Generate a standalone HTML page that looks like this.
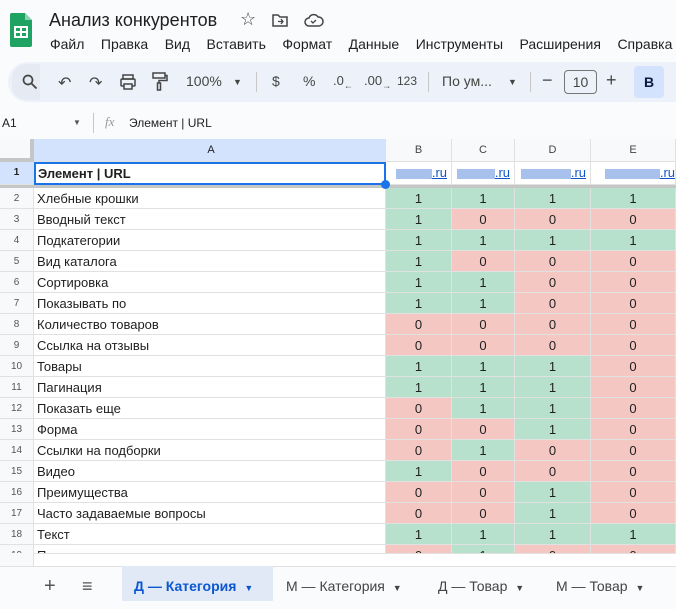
<!DOCTYPE html><html><head><meta charset="utf-8"><style>
*{box-sizing:border-box;margin:0;padding:0}
body{width:676px;height:601px;overflow:hidden;background:#f9fbfd;font-family:"Liberation Sans",Arial,sans-serif;position:relative;color:#1f1f1f}
.a{position:absolute}
.menu span{margin-right:16.5px}
.tb{position:absolute;top:62px;left:8px;width:700px;height:40px;background:#edf2fa;border-radius:20px}
.ic{position:absolute;top:73px;font-size:14px;color:#444}
.grid{position:absolute;left:0;top:139px;width:676px;height:414px;background:#fff;overflow:hidden}
.r{position:absolute;left:0;width:676px;height:21px;font-size:13px}
.r div{position:absolute;top:0;height:21px;border-right:1px solid #e1e1e1;border-bottom:1px solid #e1e1e1;line-height:21px}
.n{left:0;width:34px;background:#f8f9fa;color:#555;font-size:10px;text-align:center}
.A{left:34px;width:352px;padding-left:3px}
.B{left:386px;width:66px;text-align:center}
.C{left:452px;width:63px;text-align:center}
.D{left:515px;width:76px;text-align:center}
.E{left:591px;width:85px;text-align:center}
.g{background:#b7e1cd}.p{background:#f4c7c3}
.u{color:#1155cc;text-decoration:underline;font-size:13px;text-align:right!important;padding-right:4px}
.bl{display:inline-block;height:10px;background:#a8c1ec;vertical-align:middle}
.tab{position:absolute;top:566px;height:35px;line-height:41px;font-size:14px;color:#444;padding:0 12px}
</style></head><body>
<svg class="a" style="left:10px;top:13px" width="22" height="34" viewBox="0 0 22 34"><path d="M2 0h13l7 7v25a2 2 0 0 1-2 2H2a2 2 0 0 1-2-2V2a2 2 0 0 1 2-2z" fill="#1ea362"/><path d="M15 0v7h7z" fill="#8ed1b1"/><rect x="5" y="14" width="12" height="10" fill="none" stroke="#fff" stroke-width="2"/><path d="M5 19h12M11 14v10" stroke="#fff" stroke-width="2"/></svg>
<div class="a" style="left:49px;top:10px;font-size:18px;color:#1f1f1f">Анализ конкурентов</div>
<div class="a" style="left:240px;top:9px;font-size:18px;color:#444">☆</div>
<svg class="a" style="left:272px;top:13px" width="16" height="14"><path d="M1 2h5l2 2h7v9H1z" fill="none" stroke="#444" stroke-width="1.5"/><path d="M6 8.5h5M9 6l2 2.5L9 11" stroke="#444" stroke-width="1.3" fill="none"/></svg>
<svg class="a" style="left:304px;top:13px" width="20" height="14"><path d="M5 13a4 4 0 0 1 0-8 5 5 0 0 1 9-1 4 4 0 0 1 1 9z" fill="none" stroke="#444" stroke-width="1.5"/><path d="M7 8l2 2 3-3" stroke="#444" stroke-width="1.3" fill="none"/></svg>
<div class="a menu" style="left:50px;top:36px;font-size:14px;white-space:nowrap"><span>Файл</span><span>Правка</span><span>Вид</span><span>Вставить</span><span>Формат</span><span>Данные</span><span>Инструменты</span><span>Расширения</span><span>Справка</span></div>
<div class="tb"></div>
<div class="a" style="left:12px;top:64px;width:28px;height:36px;background:#e6ebf3;border-radius:14px 0 0 14px"></div>
<svg class="a" style="left:22px;top:74px" width="16" height="16"><circle cx="6" cy="6" r="4.5" fill="none" stroke="#444" stroke-width="1.7"/><path d="M9.5 9.5l5 5" stroke="#444" stroke-width="1.8"/></svg>
<div class="ic" style="left:58px;font-size:16px">↶</div>
<div class="ic" style="left:89px;font-size:16px">↷</div>
<svg class="a" style="left:120px;top:74px" width="16" height="16"><rect x="3" y="1" width="10" height="4" fill="none" stroke="#444" stroke-width="1.5"/><rect x="1" y="5" width="14" height="7" rx="1" fill="none" stroke="#444" stroke-width="1.5"/><rect x="4" y="10" width="8" height="5" fill="#edf2fa" stroke="#444" stroke-width="1.5"/></svg>
<svg class="a" style="left:152px;top:72px" width="16" height="20"><rect x="1" y="1" width="12" height="5" fill="none" stroke="#444" stroke-width="1.5"/><path d="M13 3.5h2v5H7v3" fill="none" stroke="#444" stroke-width="1.5"/><rect x="5.5" y="11" width="3" height="7" fill="none" stroke="#444" stroke-width="1.5"/></svg>
<div class="ic" style="left:186px;font-size:14px">100%</div>
<div class="ic" style="left:233px;font-size:9px;top:77px">▼</div>
<div class="a" style="left:256px;top:72px;width:1px;height:20px;background:#c7c7c7"></div>
<div class="ic" style="left:272px">$</div>
<div class="ic" style="left:303px">%</div>
<div class="ic" style="left:333px;font-size:13px">.0<sub style="font-size:9px">←</sub></div>
<div class="ic" style="left:364px;font-size:13px">.00<sub style="font-size:9px">→</sub></div>
<div class="ic" style="left:397px;font-size:12px;top:74px">123</div>
<div class="a" style="left:428px;top:72px;width:1px;height:20px;background:#c7c7c7"></div>
<div class="ic" style="left:442px">По ум...</div>
<div class="ic" style="left:508px;font-size:9px;top:77px">▼</div>
<div class="a" style="left:530px;top:72px;width:1px;height:20px;background:#c7c7c7"></div>
<div class="ic" style="left:542px;font-size:18px;top:70px">−</div>
<div class="a" style="left:564px;top:70px;width:33px;height:24px;border:1px solid #747775;border-radius:4px;font-size:14px;text-align:center;line-height:22px;color:#444">10</div>
<div class="ic" style="left:606px;font-size:18px;top:70px">+</div>
<div class="a" style="left:634px;top:66px;width:30px;height:32px;background:#d3e3fd;border-radius:4px;font-weight:bold;font-size:14px;text-align:center;line-height:32px;color:#0b1a3f">B</div>
<div class="a" style="left:2px;top:116px;font-size:12px">A1</div>
<div class="a" style="left:73px;top:118px;font-size:8px;color:#555">▼</div>
<div class="a" style="left:93px;top:113px;width:1px;height:20px;background:#c7c7c7"></div>
<div class="a" style="left:105px;top:114px;font-size:13px;color:#999;font-style:italic;font-family:'Liberation Serif',serif">fx</div>
<div class="a" style="left:129px;top:116px;font-size:12px">Элемент | URL</div>
<div class="grid">
<div class="r" style="top:0;height:23px"><div class="n" style="height:23px;background:#f8f9fa;border-right:4px solid #c4c7c5;border-bottom:4px solid #c4c7c5;width:34px"></div><div class="A" style="height:23px;background:#d3e3fd;text-align:center;font-size:11px;line-height:22px;color:#1f1f1f">A</div><div class="B" style="height:23px;background:#f8f9fa;font-size:11px;line-height:22px;color:#444">B</div><div class="C" style="height:23px;background:#f8f9fa;font-size:11px;line-height:22px;color:#444">C</div><div class="D" style="height:23px;background:#f8f9fa;font-size:11px;line-height:22px;color:#444">D</div><div class="E" style="height:23px;background:#f8f9fa;font-size:11px;line-height:22px;color:#444">E</div></div>
<div class="r" style="top:23px;height:23px"><div class="n" style="height:23px;background:#d3e3fd;font-weight:bold;color:#1f1f1f;line-height:22px">1</div><div class="A" style="height:23px;font-weight:bold;line-height:20px;border:2px solid #1a73e8;padding-left:2px">Элемент | URL</div><div class="B u" style="height:23px"><span class="bl" style="width:36px"></span>.ru</div><div class="C u" style="height:23px"><span class="bl" style="width:38px"></span>.ru</div><div class="D u" style="height:23px"><span class="bl" style="width:50px"></span>.ru</div><div class="E u" style="height:23px;padding-right:0"><span class="bl" style="width:55px"></span>.ru</div></div>
<div class="a" style="left:0;top:46px;width:676px;height:3px;background:#c4c7c5"></div>
<div class="a" style="left:381px;top:41px;width:9px;height:9px;border-radius:50%;background:#1a73e8;z-index:3"></div>
<div class="r" style="top:49px"><div class="n">2</div><div class="A">Хлебные крошки</div><div class="B g">1</div><div class="C g">1</div><div class="D g">1</div><div class="E g">1</div></div>
<div class="r" style="top:70px"><div class="n">3</div><div class="A">Вводный текст</div><div class="B g">1</div><div class="C p">0</div><div class="D p">0</div><div class="E p">0</div></div>
<div class="r" style="top:91px"><div class="n">4</div><div class="A">Подкатегории</div><div class="B g">1</div><div class="C g">1</div><div class="D g">1</div><div class="E g">1</div></div>
<div class="r" style="top:112px"><div class="n">5</div><div class="A">Вид каталога</div><div class="B g">1</div><div class="C p">0</div><div class="D p">0</div><div class="E p">0</div></div>
<div class="r" style="top:133px"><div class="n">6</div><div class="A">Сортировка</div><div class="B g">1</div><div class="C g">1</div><div class="D p">0</div><div class="E p">0</div></div>
<div class="r" style="top:154px"><div class="n">7</div><div class="A">Показывать по</div><div class="B g">1</div><div class="C g">1</div><div class="D p">0</div><div class="E p">0</div></div>
<div class="r" style="top:175px"><div class="n">8</div><div class="A">Количество товаров</div><div class="B p">0</div><div class="C p">0</div><div class="D p">0</div><div class="E p">0</div></div>
<div class="r" style="top:196px"><div class="n">9</div><div class="A">Ссылка на отзывы</div><div class="B p">0</div><div class="C p">0</div><div class="D p">0</div><div class="E p">0</div></div>
<div class="r" style="top:217px"><div class="n">10</div><div class="A">Товары</div><div class="B g">1</div><div class="C g">1</div><div class="D g">1</div><div class="E p">0</div></div>
<div class="r" style="top:238px"><div class="n">11</div><div class="A">Пагинация</div><div class="B g">1</div><div class="C g">1</div><div class="D g">1</div><div class="E p">0</div></div>
<div class="r" style="top:259px"><div class="n">12</div><div class="A">Показать еще</div><div class="B p">0</div><div class="C g">1</div><div class="D g">1</div><div class="E p">0</div></div>
<div class="r" style="top:280px"><div class="n">13</div><div class="A">Форма</div><div class="B p">0</div><div class="C p">0</div><div class="D g">1</div><div class="E p">0</div></div>
<div class="r" style="top:301px"><div class="n">14</div><div class="A">Ссылки на подборки</div><div class="B p">0</div><div class="C g">1</div><div class="D p">0</div><div class="E p">0</div></div>
<div class="r" style="top:322px"><div class="n">15</div><div class="A">Видео</div><div class="B g">1</div><div class="C p">0</div><div class="D p">0</div><div class="E p">0</div></div>
<div class="r" style="top:343px"><div class="n">16</div><div class="A">Преимущества</div><div class="B p">0</div><div class="C p">0</div><div class="D g">1</div><div class="E p">0</div></div>
<div class="r" style="top:364px"><div class="n">17</div><div class="A">Часто задаваемые вопросы</div><div class="B p">0</div><div class="C p">0</div><div class="D g">1</div><div class="E p">0</div></div>
<div class="r" style="top:385px"><div class="n">18</div><div class="A">Текст</div><div class="B g">1</div><div class="C g">1</div><div class="D g">1</div><div class="E g">1</div></div>
<div class="r" style="top:406px"><div class="n">19</div><div class="A">Просмотренные товары</div><div class="B p">0</div><div class="C g">1</div><div class="D p">0</div><div class="E p">0</div></div>
</div>
<div class="a" style="left:0;top:553px;width:676px;height:13px;background:#fff;border-top:1px solid #e1e1e1"></div>
<div class="a" style="left:0;top:553px;width:34px;height:13px;background:#f8f9fa;border-right:1px solid #e1e1e1"></div>
<div class="a" style="left:0;top:566px;width:676px;height:35px;background:#f9fbfd;border-top:1px solid #e1e1e1"></div>
<div class="tab" style="left:32px;font-size:20px;color:#555">+</div>
<div class="tab" style="left:70px;font-size:18px;color:#555">≡</div>
<div class="tab" style="left:122px;width:151px;background:#e1e9f7;color:#0b57d0;font-weight:bold">Д — Категория <span style="font-size:9px;margin-left:4px">▼</span></div>
<div class="tab" style="left:274px">М — Категория <span style="font-size:9px;margin-left:4px">▼</span></div>
<div class="tab" style="left:426px">Д — Товар <span style="font-size:9px;margin-left:4px">▼</span></div>
<div class="tab" style="left:544px">М — Товар <span style="font-size:9px;margin-left:4px">▼</span></div>
</body></html>
